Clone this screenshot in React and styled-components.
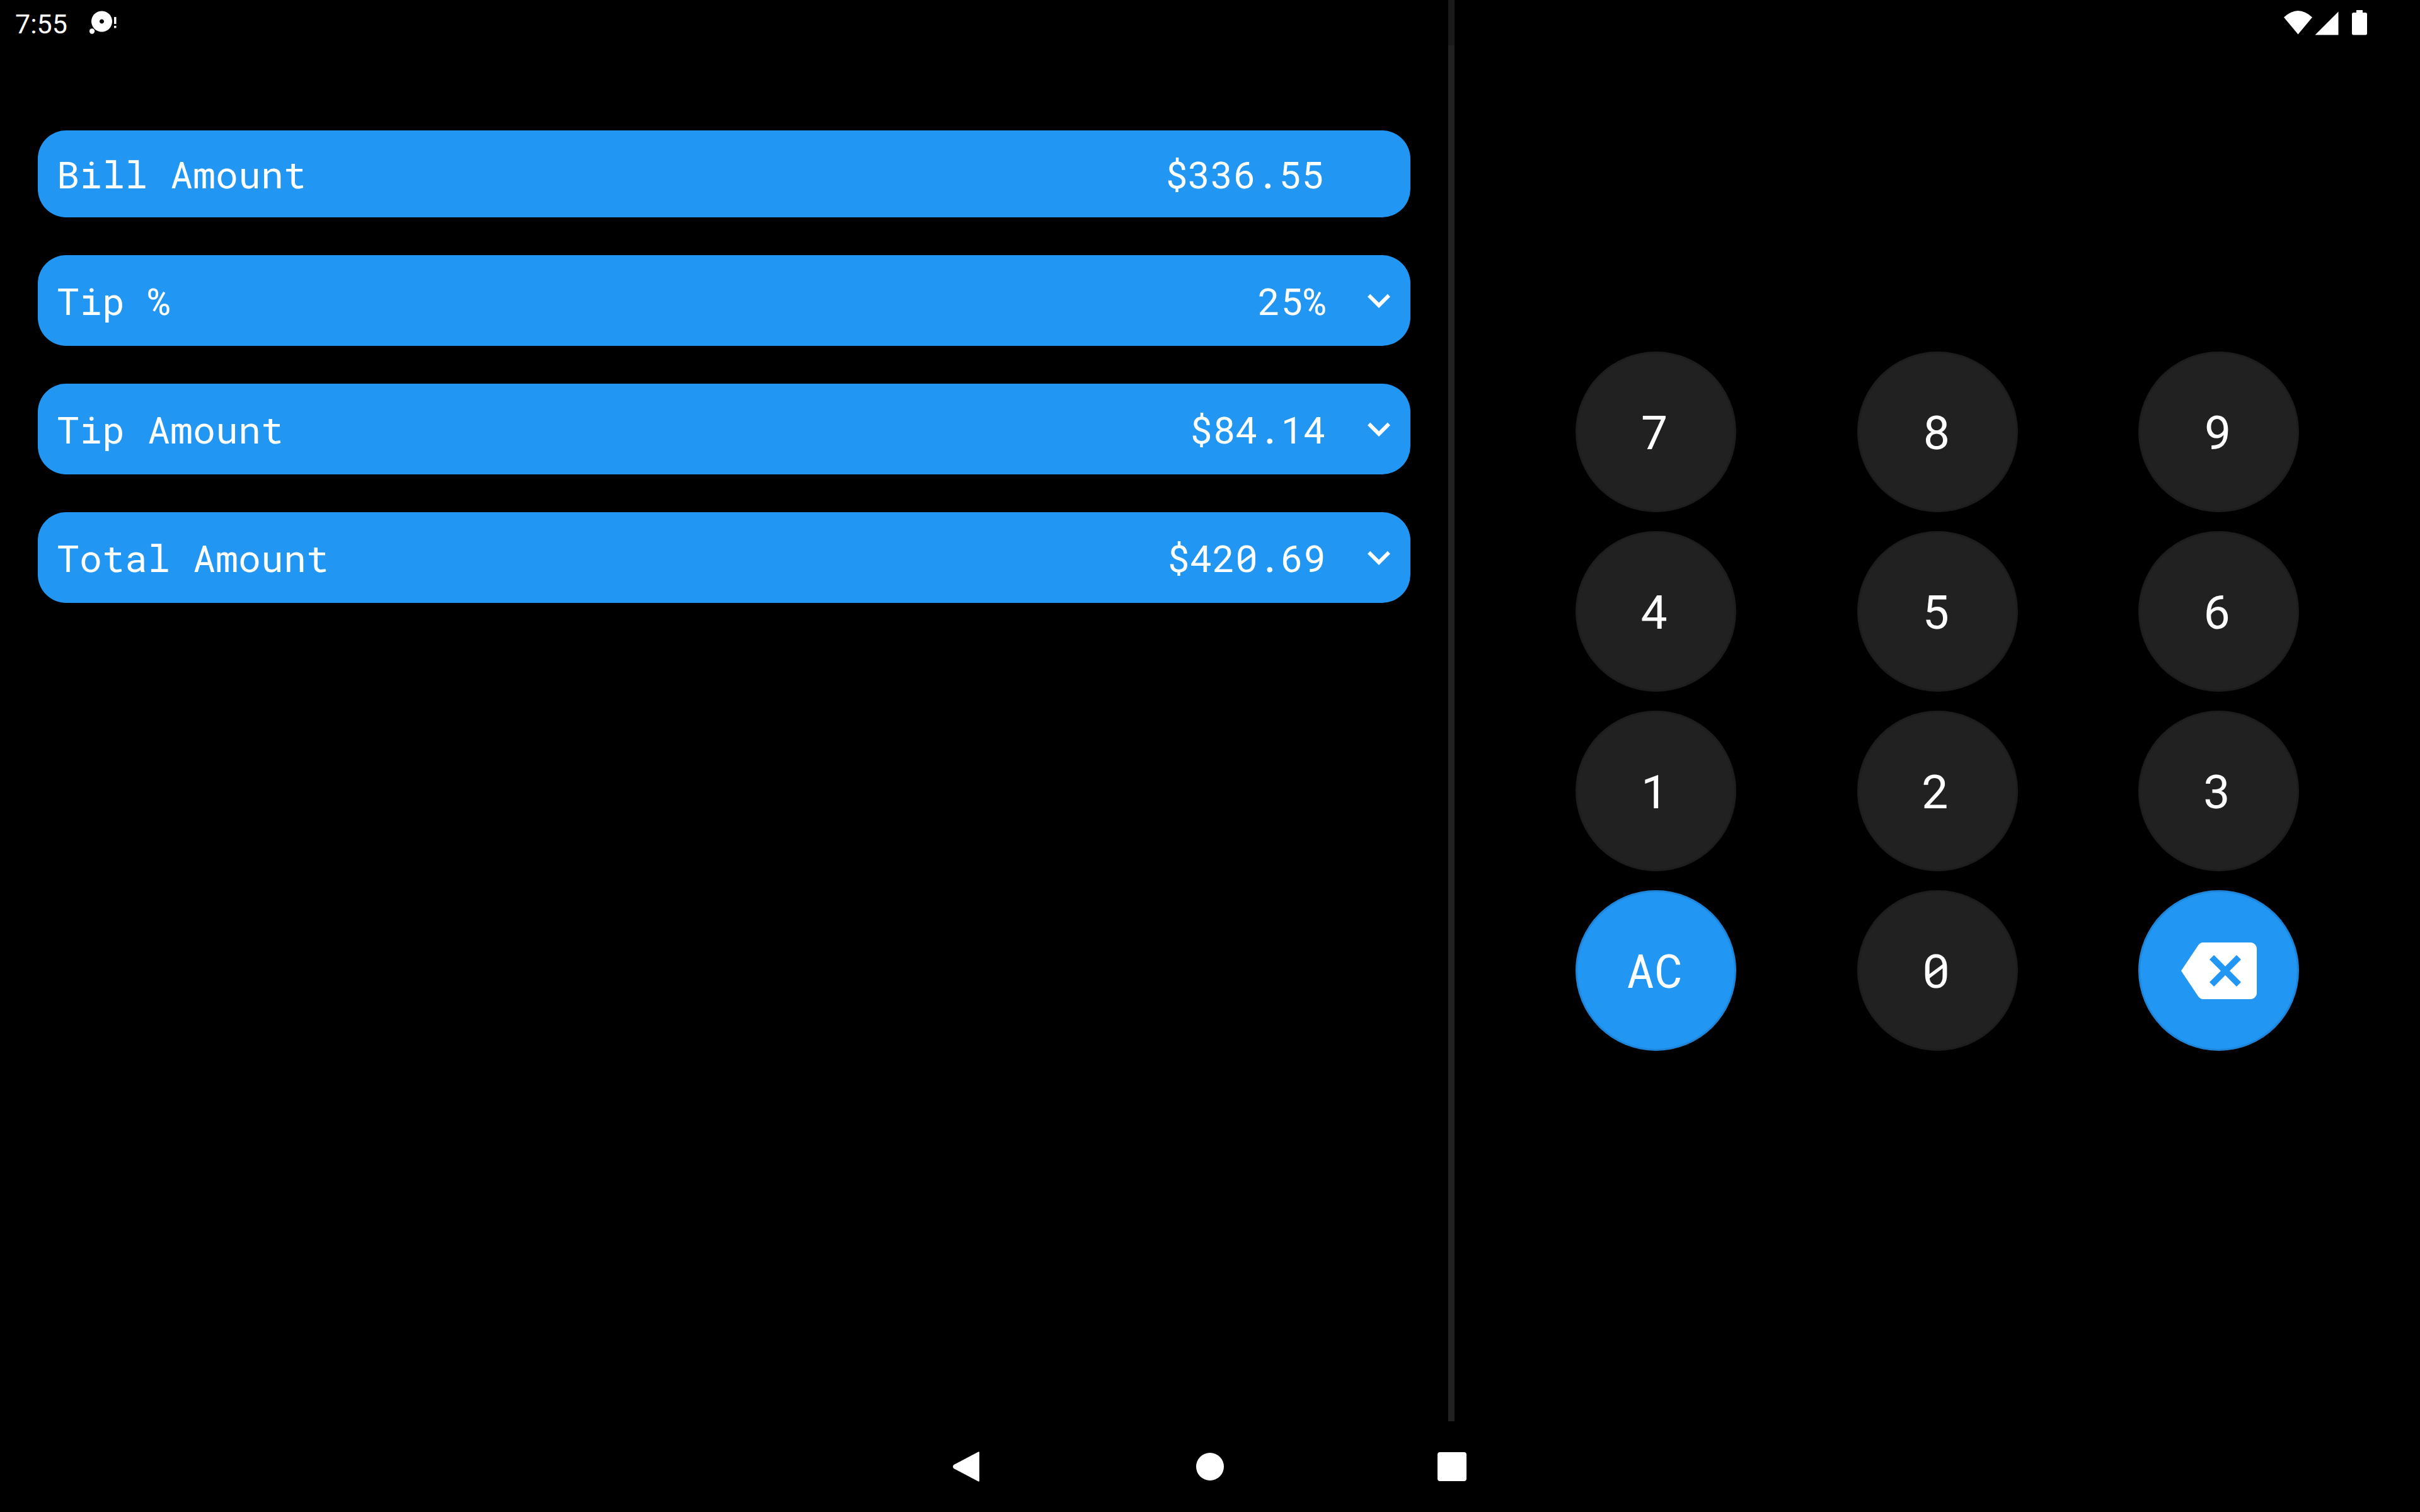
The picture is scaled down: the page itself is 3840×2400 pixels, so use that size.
import React, { useState } from "react";
import styled, { createGlobalStyle } from "styled-components";

const blue = "#2196f3";
const ink = "#212121";
const mono = '"Roboto Mono", "DejaVu Sans Mono", monospace';

const GlobalStyle = createGlobalStyle`
  *, *::before, *::after { box-sizing: border-box; }
  body { margin: 0; background: #000; color: #fff; font-family: Roboto, sans-serif; }
  button { border: 0; margin: 0; color: inherit; font: inherit; cursor: pointer; }
  svg { display: block; fill: currentColor; }
`;

const Screen = styled.div`
  display: grid;
  grid-template-columns: 3fr 10px 2fr;
  grid-template-rows: 72px 1fr 144px;
  min-height: 100vh;
`;

const StatusBar = styled.header`
  grid-row: 1;
  grid-column: 1 / -1;
  display: flex;
  align-items: center;
  justify-content: space-between;
  padding: 0 80px 0 24px;
  background: rgba(0, 0, 0, 0.2);
`;

const StatusGroup = styled.div`
  display: flex;
  align-items: center;
  gap: 35px;
`;

const Clock = styled.time`
  padding-top: 4px;
  font-size: 43px;
  line-height: 60px;
`;

const Divider = styled.div`
  grid-row: 1 / 3;
  grid-column: 2;
  background: ${ink};
`;

const Amounts = styled.main`
  grid-row: 1 / 3;
  grid-column: 1;
  display: flex;
  flex-direction: column;
  gap: 60px;
  padding: 207px 60px 60px;
`;

const Card = styled.div`
  display: flex;
  align-items: center;
  width: 100%;
  padding: ${(p) => (p.$plain ? "30px 137px 30px 30px" : "33px 14px 33px 30px")};
  border-radius: 45px;
  background: ${blue};
`;

const CardLabel = styled.label`
  flex: 1;
  font-family: ${mono};
  font-size: 60px;
  line-height: 78px;
  text-align: left;
`;

const Value = styled.output`
  font-family: ${mono};
  font-size: 60px;
  line-height: 78px;
`;

const Chevron = styled.svg`
  width: 72px;
  height: 72px;
  margin-left: 48px;
`;

const Keypad = styled.section`
  grid-row: 1 / 3;
  grid-column: 3;
  display: grid;
  grid-template-columns: repeat(3, 255px);
  justify-content: space-evenly;
  align-content: center;
  gap: 30px 0;
  padding-bottom: 30px;
`;

const Key = styled.button`
  display: flex;
  align-items: center;
  justify-content: center;
  height: 255px;
  padding: 0;
  border-radius: 50%;
  background: ${(p) => (p.$accent ? blue : ink)};
  box-shadow: inset 0 0 0 3px rgba(0, 0, 0, 0.1);
`;

const KeyText = styled.span`
  padding: 0 4px 4px 0;
  font-family: ${mono};
  font-size: 75px;
  line-height: 99px;
`;

const NavBar = styled.nav`
  grid-row: 3;
  grid-column: 1 / -1;
  display: flex;
  justify-content: center;
`;

const NavButton = styled.button`
  display: flex;
  align-items: center;
  justify-content: center;
  width: 384px;
  height: 144px;
  padding: 0;
  background: none;
`;

const rows = [
  { label: "Tip %", value: "25%" },
  { label: "Tip Amount", value: "$84.14" },
  { label: "Total Amount", value: "$420.69" },
];

function Backspace() {
  return (
    <svg width="120" height="120" viewBox="0 0 24 24" aria-hidden="true">
      <path d="M22 3H7c-.69 0-1.23.35-1.59.88L0 12l5.41 8.11c.36.53.9.89 1.59.89h15c1.1 0 2-.9 2-2V5c0-1.1-.9-2-2-2zm-3 12.59L17.59 17 14 13.41 10.41 17 9 15.59 12.59 12 9 8.41 10.41 7 14 10.59 17.59 7 19 8.41 15.41 12 19 15.59z" />
    </svg>
  );
}

export default function App() {
  const [open, setOpen] = useState(null);
  return (
    <>
      <GlobalStyle />
      <Screen>
        <Amounts>
          <Card $plain>
            <CardLabel htmlFor="bill">Bill Amount</CardLabel>
            <Value id="bill">$336.55</Value>
          </Card>
          {rows.map((row) => (
            <Card
              as="button"
              type="button"
              key={row.label}
              aria-expanded={open === row.label}
              onClick={() => setOpen(open === row.label ? null : row.label)}
            >
              <CardLabel as="span">{row.label}</CardLabel>
              <Value as="span">{row.value}</Value>
              <Chevron viewBox="0 0 24 24" aria-hidden="true">
                <path d="M16.59 8.59 12 13.17 7.41 8.59 6 10l6 6 6-6z" />
              </Chevron>
            </Card>
          ))}
        </Amounts>
        <Divider />
        <Keypad aria-label="Keypad">
          {["7", "8", "9", "4", "5", "6", "1", "2", "3"].map((n) => (
            <Key type="button" key={n}>
              <KeyText>{n}</KeyText>
            </Key>
          ))}
          <Key type="button" $accent>
            <KeyText>AC</KeyText>
          </Key>
          <Key type="button">
            <KeyText>0</KeyText>
          </Key>
          <Key type="button" $accent aria-label="Backspace">
            <Backspace />
          </Key>
        </Keypad>
        <StatusBar>
          <StatusGroup>
            <Clock>7:55</Clock>
            <svg width="44" height="40" viewBox="0 0 44 40" aria-hidden="true">
              <path fillRule="evenodd" d="M19.500 1.500a16.500 16.500 0 1 0 .001 0zM19.500 14.500a3.500 3.500 0 1 1-.001 0z" />
              <circle cx="4" cy="33.500" r="4.200" />
              <path d="M39 11h3.500v11H39zM39 25h3.500v3.500H39z" />
            </svg>
          </StatusGroup>
          <svg width="136" height="40" viewBox="0 0 136 40" aria-hidden="true">
            <path d="M0 11.500Q22.500-9.500 45 11.500L22.500 38.500z" />
            <path d="M49.500 39.500L86.500 2.500V39.500z" />
            <path d="M115 0h10v4h4.500q2.500 0 2.500 2.500V37q0 2.500-2.500 2.500h-19q-2.500 0-2.500-2.500V6.500q0-2.500 2.500-2.500h4.500z" />
          </svg>
        </StatusBar>
        <NavBar aria-label="System">
          <NavButton type="button" aria-label="Back">
            <svg width="48" height="48" viewBox="0 0 48 48" aria-hidden="true">
              <path d="M39.500 1Q42 -1 42 2V46Q42 49 39.500 47L1.500 27Q-1.500 24 1.500 21z" />
            </svg>
          </NavButton>
          <NavButton type="button" aria-label="Home">
            <svg width="44" height="44" viewBox="0 0 44 44" aria-hidden="true">
              <circle cx="22" cy="22" r="22" />
            </svg>
          </NavButton>
          <NavButton type="button" aria-label="Recent apps">
            <svg width="46" height="46" viewBox="0 0 46 46" aria-hidden="true">
              <rect width="46" height="46" rx="4" />
            </svg>
          </NavButton>
        </NavBar>
      </Screen>
    </>
  );
}
